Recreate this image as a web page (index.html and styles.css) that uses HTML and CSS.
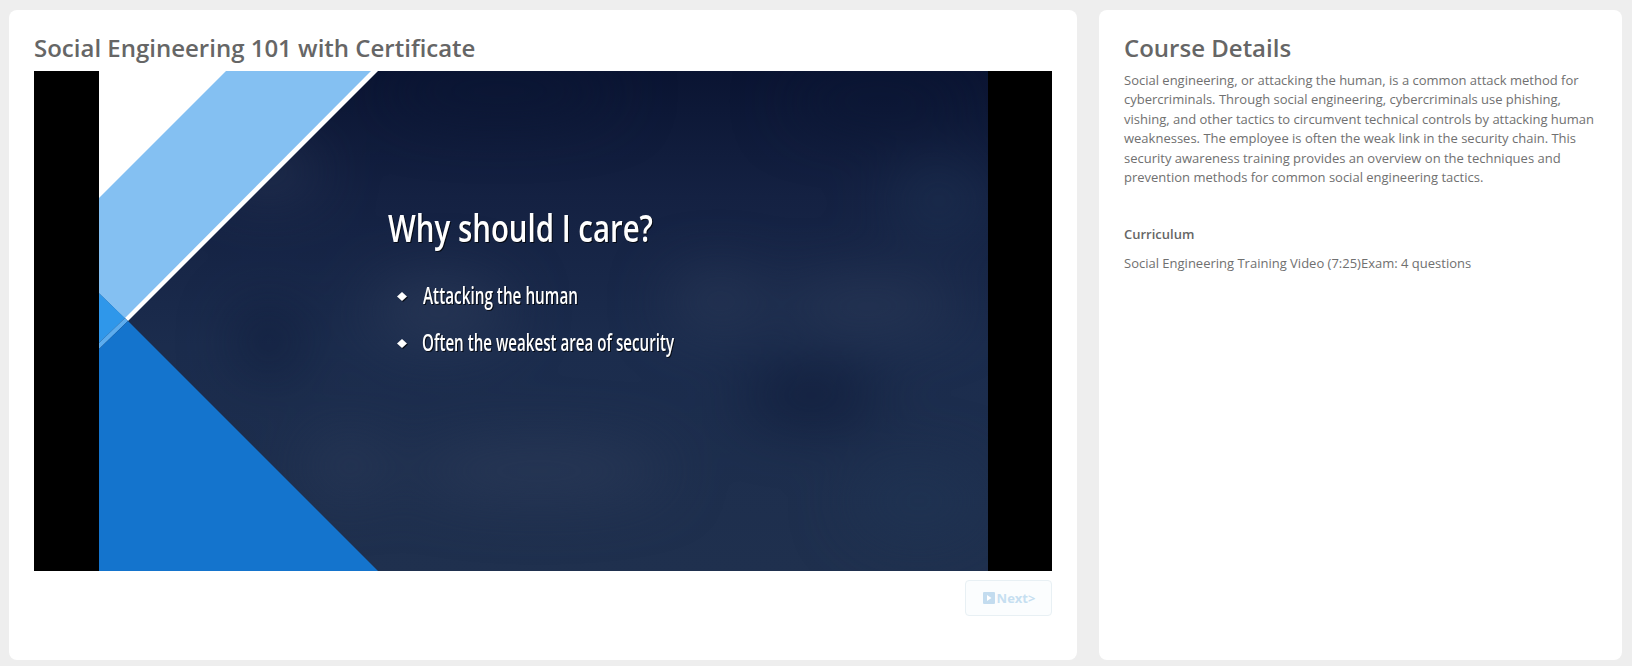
FILE: index.html
```html
<!DOCTYPE html>
<html lang="en">
<head>
<meta charset="utf-8">
<title>Social Engineering 101 with Certificate</title>
<link rel="stylesheet" href="styles.css">
</head>
<body>
<main class="layout">
  <section class="card card-main">
    <h1 class="card-title">Social Engineering 101 with Certificate</h1>
    <div class="video">
      <svg class="slide" width="889" height="500" viewBox="0 0 889 500" role="img" aria-label="Video slide">
        <defs>
          <linearGradient id="base" x1="0" y1="0" x2="0" y2="1">
            <stop offset="0" stop-color="#0a1432"/>
            <stop offset="0.25" stop-color="#142142"/>
            <stop offset="0.55" stop-color="#1b2c4d"/>
            <stop offset="1" stop-color="#1f304e"/>
          </linearGradient>
          <filter id="blur" x="-50%" y="-50%" width="200%" height="200%" color-interpolation-filters="sRGB">
            <feGaussianBlur stdDeviation="30"/>
          </filter>
          <filter id="shadow" x="-5%" y="-20%" width="110%" height="140%" color-interpolation-filters="sRGB">
            <feDropShadow dx="1" dy="1" stdDeviation="0.6" flood-color="#000" flood-opacity="0.7"/>
          </filter>
        </defs>
        <rect width="889" height="500" fill="url(#base)"/>
        <g filter="url(#blur)">
          <ellipse class="blob-light" cx="340" cy="240" rx="70" ry="30"/>
          <ellipse class="blob-light" cx="770" cy="235" rx="90" ry="22"/>
          <ellipse class="blob-light" cx="440" cy="400" rx="130" ry="24"/>
          <ellipse class="blob-light" cx="250" cy="395" rx="40" ry="24"/>
          <ellipse class="blob-light" cx="620" cy="230" rx="50" ry="24"/>
          <ellipse class="blob-light" cx="170" cy="100" rx="50" ry="20"/>
          <ellipse class="blob-blue" cx="840" cy="130" rx="50" ry="40"/>
          <ellipse class="blob-blue" cx="820" cy="430" rx="70" ry="40"/>
          <ellipse class="blob-dark" cx="712" cy="325" rx="70" ry="26"/>
          <ellipse class="blob-dark" cx="170" cy="270" rx="30" ry="30"/>
          <ellipse class="blob-dark" cx="400" cy="20" rx="120" ry="24"/>
          <ellipse class="blob-dark" cx="780" cy="30" rx="90" ry="22"/>
        </g>
        <polygon class="p-white" points="0,0 279,0 29,250 0,222"/>
        <polygon class="p-light" points="127,0 272,0 26,247 0,222 0,127"/>
        <polygon class="p-mid" points="0,222 26,247 0,272"/>
        <polygon class="p-strip" points="26,247 29,250 0,278 0,272"/>
        <polygon class="p-deep" points="29,250 279,500 0,500 0,278"/>
        <g filter="url(#shadow)">
          <text class="slide-title" x="289" y="171" textLength="265" lengthAdjust="spacingAndGlyphs">Why should I care?</text>
          <text class="slide-item" x="324" y="233" textLength="155" lengthAdjust="spacingAndGlyphs">Attacking the human</text>
          <text class="slide-item" x="323" y="280" textLength="252" lengthAdjust="spacingAndGlyphs">Often the weakest area of security</text>
          <polygon class="p-bullet" points="303,221 308,225.5 303,230 298,225.5"/>
          <polygon class="p-bullet" points="303,268 308,272.5 303,277 298,272.5"/>
        </g>
      </svg>
    </div>
    <div class="actions">
      <button class="next-btn" type="button" disabled>
        <svg class="next-icon" width="12" height="12" viewBox="0 0 12 12" aria-hidden="true">
          <rect class="next-icon-box" width="12" height="12" rx="1"/>
          <polygon class="next-icon-play" points="4,3 8.5,6 4,9"/>
        </svg>
        <span class="next-label">Next&gt;</span>
      </button>
    </div>
  </section>
  <aside class="card card-side">
    <h2 class="card-title">Course Details</h2>
    <p class="description">Social engineering, or attacking the human, is a common attack method for cybercriminals. Through social engineering, cybercriminals use phishing, vishing, and other tactics to circumvent technical controls by attacking human weaknesses. The employee is often the weak link in the security chain. This security awareness training provides an overview on the techniques and prevention methods for common social engineering tactics.</p>
    <h3 class="section-title">Curriculum</h3>
    <p class="curriculum">Social Engineering Training Video (7:25)Exam: 4 questions</p>
  </aside>
</main>
</body>
</html>
```
FILE: styles.css
```css
* { box-sizing: border-box; }

html, body {
  margin: 0;
  height: 100%;
}

body {
  background: #eeeeee;
  font-family: "Open Sans", "Liberation Sans", sans-serif;
  color: #707070;
  overflow: hidden;
}

.layout {
  display: flex;
  gap: 22px;
  height: 666px;
  padding: 10px 9px 6px;
}

.card {
  background: #ffffff;
  border-radius: 8px;
  padding: 22px 25px 24px;
}

.card-main { width: 1068px; }
.card-side { width: 523px; }

.card-title {
  margin: 0;
  font-size: 24px;
  font-weight: 600;
  line-height: 32px;
  color: #666666;
}

.video {
  display: flex;
  justify-content: center;
  height: 500px;
  margin-top: 7px;
  background: #000000;
}

.slide { display: block; }

.blob-light { fill: #2d3c5a; opacity: 0.75; }
.blob-blue { fill: #1f3656; opacity: 0.5; }
.blob-dark { fill: #0c1734; opacity: 0.7; }

.p-white { fill: #ffffff; }
.p-light { fill: #84c0f2; }
.p-mid { fill: #2f97ea; }
.p-strip { fill: #5cacee; }
.p-deep { fill: #1474cd; }
.p-bullet { fill: #ffffff; }

.slide-title,
.slide-item {
  fill: #ffffff;
  font-family: "Open Sans", sans-serif;
  font-weight: 600;
}

.slide-title { font-size: 38px; }
.slide-item { font-size: 24px; }

.actions {
  display: flex;
  justify-content: flex-end;
  margin-top: 9px;
}

.next-btn {
  display: flex;
  align-items: center;
  justify-content: center;
  gap: 2px;
  width: 87px;
  height: 36px;
  padding: 0 0 0 1px;
  background: #fbfdfe;
  border: 1px solid #e8f0f4;
  border-radius: 4px;
  font-family: "Open Sans", sans-serif;
  font-size: 13px;
  font-weight: 700;
  color: #c6dff1;
}

.next-icon { display: block; }
.next-icon-box { fill: #c3dcef; }
.next-icon-play { fill: #ffffff; }

.description {
  margin: 7px 0 0;
  font-size: 13px;
  line-height: 19.4px;
}

.section-title {
  margin: 37px 0 0;
  font-size: 13px;
  font-weight: 600;
  line-height: 20px;
  color: #666666;
}

.curriculum {
  margin: 9px 0 0;
  font-size: 13px;
  line-height: 20px;
}
```
